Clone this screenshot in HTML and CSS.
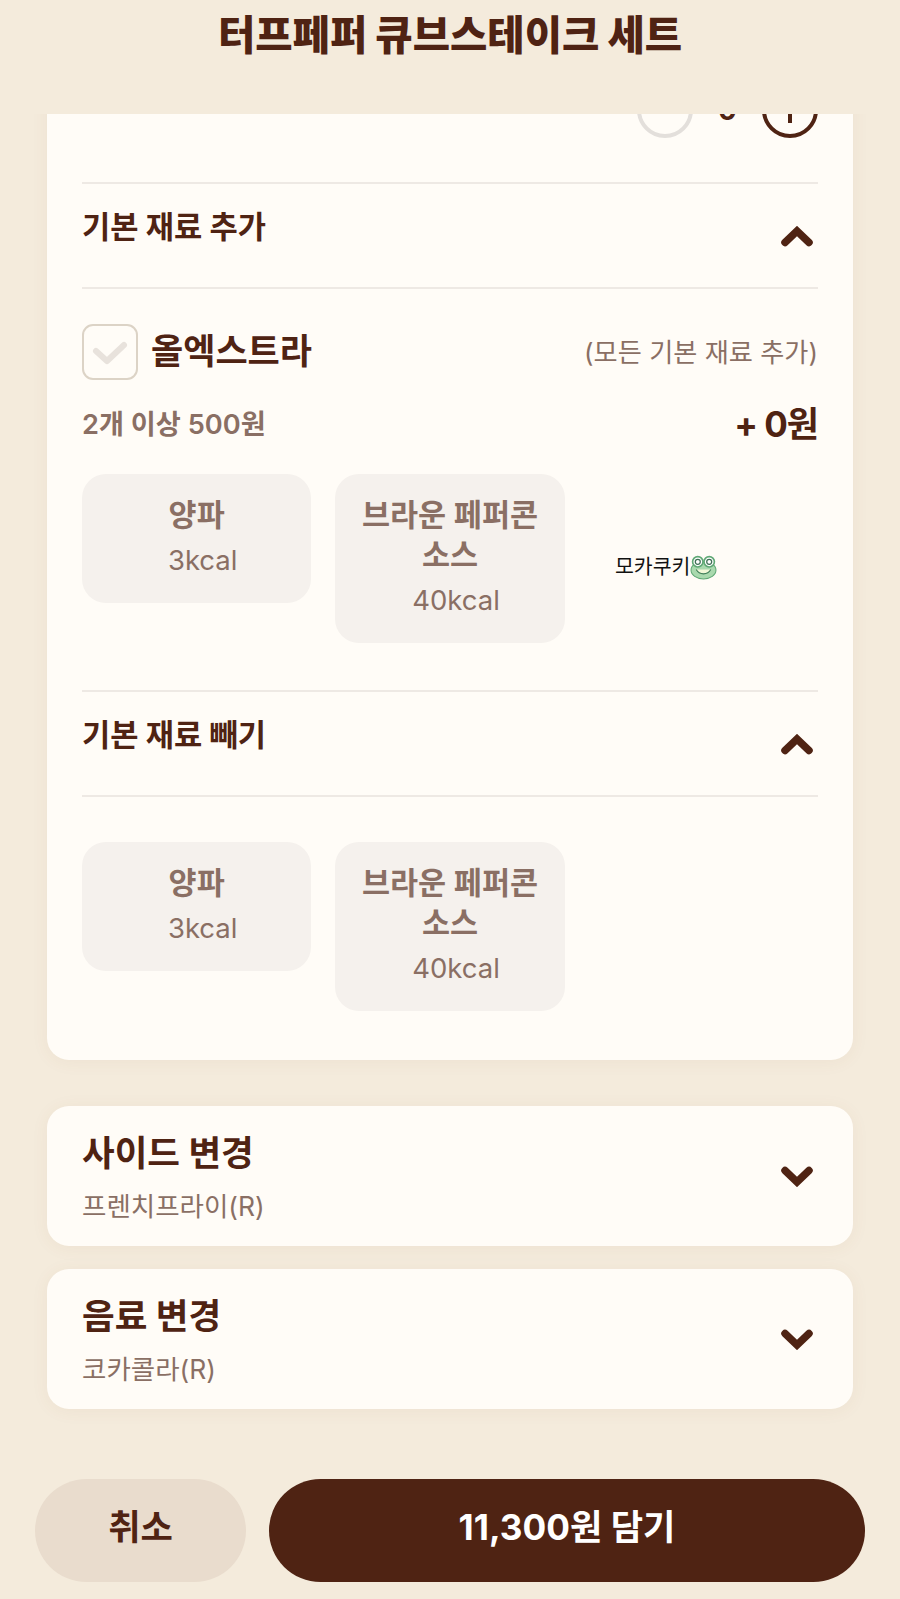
FILE: index.html
```html
<!DOCTYPE html>
<html lang="ko">
<head>
    <meta charset="UTF-8">
    <meta name="viewport" content="width=device-width, initial-scale=1.0">
    <title>터프페퍼 큐브스테이크 세트</title>
    <link rel="stylesheet" href="styles.css">
</head>
<body>
    <div class="sheet">
        <header class="sheet-header">
            <h1>터프페퍼 큐브스테이크 세트</h1>
        </header>

        <main class="sheet-body">
            <section class="card card-main">
                <div class="stepper">
                    <span class="step step-off"></span>
                    <span class="step-count">0</span>
                    <span class="step step-on">
                        <svg viewBox="0 0 48 48"><path d="M24 11v26M11 24h26"/></svg>
                    </span>
                </div>

                <div class="group-head">
                    <h2>기본 재료 추가</h2>
                    <svg class="chevron chevron-low" viewBox="0 0 34 21"><path d="M5 16.5 17 5l12 11.5"/></svg>
                </div>
                <div class="group-content">
                    <div class="extra-row">
                        <span class="checkbox">
                            <svg viewBox="0 0 52 52"><path d="M12 25l11 10 17-16"/></svg>
                        </span>
                        <strong class="extra-name">올엑스트라</strong>
                        <span class="extra-note">(모든 기본 재료 추가)</span>
                    </div>
                    <div class="price-row">
                        <span class="price-note">2개 이상 500원</span>
                        <strong class="price-value">+ 0원</strong>
                    </div>
                    <div class="options">
                        <div class="option">
                            <span class="option-name">양파</span>
                            <span class="option-kcal">3kcal</span>
                        </div>
                        <div class="option">
                            <span class="option-name">브라운 페퍼콘 소스</span>
                            <span class="option-kcal">40kcal</span>
                        </div>
                    </div>
                </div>

                <div class="group-head">
                    <h2>기본 재료 빼기</h2>
                    <svg class="chevron chevron-low" viewBox="0 0 34 21"><path d="M5 16.5 17 5l12 11.5"/></svg>
                </div>
                <div class="group-content group-last">
                    <div class="options">
                        <div class="option">
                            <span class="option-name">양파</span>
                            <span class="option-kcal">3kcal</span>
                        </div>
                        <div class="option">
                            <span class="option-name">브라운 페퍼콘 소스</span>
                            <span class="option-kcal">40kcal</span>
                        </div>
                    </div>
                </div>
            </section>

            <section class="card card-change">
                <div>
                    <h3>사이드 변경</h3>
                    <p>프렌치프라이(R)</p>
                </div>
                <svg class="chevron" viewBox="0 0 34 21"><path d="M5 4.5 17 16 29 4.5"/></svg>
            </section>

            <section class="card card-change">
                <div>
                    <h3>음료 변경</h3>
                    <p>코카콜라(R)</p>
                </div>
                <svg class="chevron" viewBox="0 0 34 21"><path d="M5 4.5 17 16 29 4.5"/></svg>
            </section>
        </main>

        <footer class="sheet-footer">
            <button class="btn btn-cancel">취소</button>
            <button class="btn btn-submit">11,300원 담기</button>
        </footer>

        <div class="watermark">
            <span>모카쿠키</span>
            <svg viewBox="0 0 26 24">
                <ellipse cx="13" cy="14.5" rx="12" ry="8.5" fill="#a9d9ae" stroke="#5fa875"/>
                <circle cx="7.5" cy="6.5" r="5" fill="#fff" stroke="#5fa875" stroke-width="1.6"/>
                <circle cx="18.5" cy="6.5" r="5" fill="#fff" stroke="#5fa875" stroke-width="1.6"/>
                <circle cx="7.5" cy="6.5" r="2.4" fill="#fff" stroke="#3f6f55" stroke-width="1.2"/>
                <circle cx="18.5" cy="6.5" r="2.4" fill="#fff" stroke="#3f6f55" stroke-width="1.2"/>
                <path d="M6 14c3 5.5 11 5.5 14 0" fill="#f1f8d8" stroke="#3f7d58"/>
            </svg>
        </div>
    </div>
</body>
</html>
```

FILE: styles.css
```css
* {
    box-sizing: border-box;
}

body {
    margin: 0;
    background: #f4ebdc;
    color: #4f2313;
    font-family: Inter, "Noto Sans CJK KR", sans-serif;
}

.sheet {
    position: relative;
    display: flex;
    flex-direction: column;
    height: 1599px;
    overflow: hidden;
    background: #f4ebdc;
}

.sheet-header {
    flex: 0 0 114px;
    text-align: center;
}

h1 {
    margin: 0;
    padding-top: 10px;
    font-size: 40.6px;
    line-height: 52px;
    font-weight: 900;
}

.sheet-body {
    flex: 1;
    min-height: 0;
    overflow: hidden;
    padding: 0 47px;
}

.card {
    background: #fffcf7;
    border-radius: 22px;
    box-shadow: 0 2px 18px rgba(130, 90, 50, 0.06);
}

.card-main {
    height: 1001px;
    margin-top: -55px;
    margin-bottom: 46px;
    padding: 0 35px;
    border-radius: 0 0 22px 22px;
}

.stepper {
    display: flex;
    align-items: center;
    justify-content: flex-end;
    height: 123px;
    padding-bottom: 22px;
    gap: 25px;
}

.step {
    width: 56px;
    height: 56px;
    border-radius: 50%;
    border: 4px solid #e3dfdb;
}

.step-on {
    border-color: #4f2313;
}

.step svg {
    display: block;
    width: 48px;
    height: 48px;
    fill: none;
    stroke: #4f2313;
    stroke-width: 4;
}

.step-count {
    font-size: 28px;
    font-weight: 700;
}

.group-head {
    display: flex;
    justify-content: space-between;
    height: 107px;
    padding-top: 21px;
    border-top: 2px solid #eee9e4;
    border-bottom: 2px solid #eee9e4;
}

.group-head h2 {
    margin: 0;
    font-size: 30.7px;
    line-height: 44px;
    font-weight: 700;
}

.chevron {
    flex: none;
    width: 34px;
    height: 21px;
    margin-right: 4px;
    fill: none;
    stroke: #4f2313;
    stroke-width: 7.5;
    stroke-linecap: round;
}

.chevron-low {
    margin-top: 21px;
}

.group-content {
    padding-top: 34px;
    height: 401px;
}

.group-last {
    height: auto;
    padding-top: 45px;
}

.extra-row {
    display: flex;
    align-items: center;
    gap: 13px;
}

.checkbox {
    width: 56px;
    height: 56px;
    border: 2px solid #dcd3c6;
    border-radius: 11px;
}

.checkbox svg {
    display: block;
    width: 52px;
    height: 52px;
    fill: none;
    stroke: #e8e2dc;
    stroke-width: 6;
    stroke-linecap: round;
    stroke-linejoin: round;
}

.extra-name {
    padding-bottom: 6px;
    font-size: 35px;
    font-weight: 700;
}

.extra-note {
    margin-left: auto;
    padding-bottom: 2px;
    font-size: 26.2px;
    color: #8a6f64;
}

.price-row {
    display: flex;
    align-items: center;
    justify-content: space-between;
    height: 50px;
    margin-top: 18px;
}

.price-note {
    padding-bottom: 2px;
    font-size: 27.2px;
    font-weight: 600;
    color: #8a6f64;
}

.price-value {
    padding-bottom: 4px;
    font-size: 35px;
    font-weight: 700;
    letter-spacing: -1px;
}

.options {
    display: grid;
    grid-template-columns: repeat(3, 1fr);
    align-items: start;
    gap: 24px;
    margin-top: 26px;
}

.group-last .options {
    margin-top: 0;
}

.option {
    display: flex;
    flex-direction: column;
    align-items: center;
    padding: 21px 16px 23px;
    border-radius: 24px;
    background: #f5f1ed;
    color: #8a6f64;
    text-align: center;
}

.option-name {
    font-size: 30.5px;
    line-height: 40px;
    font-weight: 600;
}

.option-kcal {
    margin-top: 5px;
    padding-left: 12px;
    font-size: 27.5px;
    line-height: 40px;
}

.card-change {
    display: flex;
    align-items: center;
    justify-content: space-between;
    height: 140px;
    margin-bottom: 23px;
    padding: 0 35px;
}

.card-change h3 {
    margin: 0;
    padding-top: 3px;
    font-size: 35.5px;
    line-height: 48px;
    font-weight: 700;
}

.card-change p {
    margin: 8px 0 0;
    font-size: 26.5px;
    line-height: 40px;
    color: #8a6f64;
}

.sheet-footer {
    display: flex;
    gap: 23px;
    padding: 0 35px 17px;
}

.btn {
    height: 103px;
    padding-bottom: 13px;
    border: 0;
    border-radius: 52px;
    font-family: inherit;
    font-size: 35.2px;
    font-weight: 700;
}

.btn-cancel {
    flex: 0 0 211px;
    background: #e9dccd;
    color: #4f2313;
}

.btn-submit {
    flex: 1;
    background: #4f2313;
    color: #fff;
}

/* pasted over the capture */
.watermark {
    position: absolute;
    left: 615px;
    top: 552px;
    display: flex;
    align-items: center;
    color: #111;
    font-size: 20.5px;
    line-height: 30px;
}

.watermark svg {
    width: 27px;
    height: 25px;
}
```
